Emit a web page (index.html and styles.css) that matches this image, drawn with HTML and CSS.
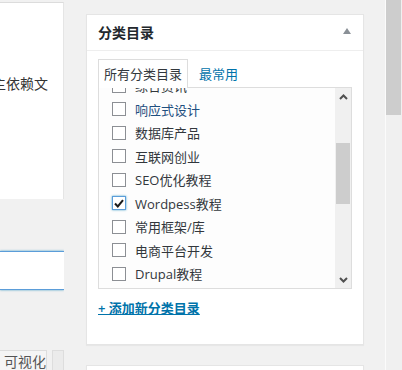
FILE: index.html
```html
<!DOCTYPE html>
<html lang="zh-CN">
<head>
    <meta charset="UTF-8">
    <meta name="viewport" content="width=device-width, initial-scale=1.0">
    <title>分类目录</title>
    <link rel="stylesheet" href="styles.css">
</head>
<body>
    <div class="page">
        <div class="editor">
            <div class="editor-panel">
                <p class="editor-text">主依赖文</p>
            </div>
            <div class="title-input"></div>
            <div class="editor-tabs">
                <span class="editor-tab">可视化</span>
                <span class="editor-tab editor-tab-off"></span>
            </div>
        </div>

        <div class="sidebar">
            <div class="postbox">
                <div class="postbox-header">
                    <h2>分类目录</h2>
                    <span class="toggle"></span>
                </div>
                <div class="postbox-inside">
                    <ul class="cat-tabs">
                        <li class="cat-tab active">所有分类目录</li>
                        <li class="cat-tab"><a href="#">最常用</a></li>
                    </ul>
                    <div class="cat-panel">
                        <div class="cat-list-wrap">
                            <ul class="cat-list">
                                <li><span class="box"></span>综合资讯</li>
                                <li class="hover"><span class="box"></span>响应式设计</li>
                                <li><span class="box"></span>数据库产品</li>
                                <li><span class="box"></span>互联网创业</li>
                                <li><span class="box"></span>SEO优化教程</li>
                                <li><span class="box checked"><svg width="10" height="9" viewBox="0 0 10 9"><path d="M1 4.5 L3.8 7.5 L9 1.2" fill="none" stroke="#1a1a1a" stroke-width="2"/></svg></span>Wordpess教程</li>
                                <li><span class="box"></span>常用框架/库</li>
                                <li><span class="box"></span>电商平台开发</li>
                                <li><span class="box"></span>Drupal教程</li>
                            </ul>
                        </div>
                        <div class="scrollbar">
                            <span class="arrow"><svg width="9" height="6" viewBox="0 0 9 6"><path d="M1 5 L4.5 1.5 L8 5" fill="none" stroke="#505050" stroke-width="2"/></svg></span>
                            <div class="track">
                                <div class="thumb"></div>
                            </div>
                            <span class="arrow"><svg width="9" height="6" viewBox="0 0 9 6"><path d="M1 1 L4.5 4.5 L8 1" fill="none" stroke="#505050" stroke-width="2"/></svg></span>
                        </div>
                    </div>
                    <a class="add-new" href="#">+ 添加新分类目录</a>
                </div>
            </div>
            <div class="postbox postbox-next"></div>
        </div>

        <div class="page-scroll">
            <div class="page-thumb"></div>
        </div>
    </div>
</body>
</html>
```

FILE: styles.css
```css
body {
    margin: 0;
    padding: 0;
    background-color: #f1f1f1;
    color: #444;
    font-family: "Open Sans", "Noto Sans CJK SC", sans-serif;
    font-size: 13px;
    overflow: hidden;
}

.page {
    display: flex;
    width: 402px;
    height: 370px;
    overflow: hidden;
}

/* left editor column */
.editor {
    width: 64px;
    flex-shrink: 0;
    display: flex;
    flex-direction: column;
    overflow: hidden;
}

.editor-panel {
    margin-top: 2px;
    height: 197px;
    background-color: #fff;
    border-top: 1px solid #dcdcdc;
    border-right: 1px solid #e5e5e5;
    overflow: hidden;
}

.editor-text {
    margin: 70px 0 0 -8px;
    line-height: 22px;
    font-size: 14px;
    color: #333;
    white-space: nowrap;
}

.title-input {
    margin-top: 52px;
    height: 37px;
    background-color: #fff;
    border-top: 1px solid #5b9dd9;
    border-bottom: 1px solid #5b9dd9;
    box-shadow: 0 0 2px rgba(30, 140, 190, 0.8);
}

.editor-tabs {
    margin-top: 60px;
    display: flex;
    gap: 5px;
}

.editor-tab {
    width: 52px;
    height: 20px;
    margin-left: -1px;
    background-color: #f5f5f5;
    border: 1px solid #ddd;
    border-bottom: none;
    font-size: 14px;
    line-height: 22px;
    color: #555;
    padding-left: 4px;
    box-sizing: border-box;
    white-space: nowrap;
}

.editor-tab-off {
    margin-left: 0;
    width: 20px;
    background-color: #ebebeb;
}

/* sidebar */
.sidebar {
    margin-left: 22px;
    width: 278px;
    flex-shrink: 0;
}

.postbox {
    margin-top: 14px;
    background-color: #fff;
    border: 1px solid #e5e5e5;
    box-shadow: 0 1px 1px rgba(0, 0, 0, 0.04);
    box-sizing: border-box;
}

.postbox-header {
    height: 35px;
    border-bottom: 1px solid #eee;
    display: flex;
    align-items: center;
    justify-content: space-between;
    padding: 0 12px 0 11px;
}

.postbox-header h2 {
    margin: 0 0 1px;
    font-size: 14px;
    font-weight: bold;
    color: #23282d;
}

.toggle {
    width: 0;
    height: 0;
    border-left: 4px solid transparent;
    border-right: 4px solid transparent;
    border-bottom: 6px solid #8a9096;
    margin-bottom: 3px;
}

.postbox-inside {
    padding: 8px 11px 27px;
}

.cat-tabs {
    list-style: none;
    margin: 0 0 -1px;
    padding: 0;
    display: flex;
    position: relative;
    z-index: 1;
}

.cat-tab {
    height: 29px;
    line-height: 28px;
    padding: 0 5px;
    box-sizing: border-box;
    border: 1px solid transparent;
    border-bottom: none;
}

.cat-tab.active {
    border-color: #ddd;
    background-color: #fff;
    color: #32373c;
}

.cat-tab a {
    color: #0073aa;
    text-decoration: none;
    padding-left: 5px;
}

.cat-panel {
    height: 202px;
    border: 1px solid #ddd;
    background-color: #fdfdfd;
    box-sizing: border-box;
    display: flex;
}

.cat-list-wrap {
    flex: 1;
    overflow: hidden;
}

.cat-list {
    list-style: none;
    margin: -14px 0 0;
    padding: 0 0 0 13px;
}

.cat-list li {
    height: 23.5px;
    display: flex;
    align-items: center;
    color: #32373c;
    white-space: nowrap;
}

.cat-list li.hover {
    color: #1f4f7f;
}

.box {
    width: 14px;
    height: 14px;
    box-sizing: border-box;
    border: 1px solid #8c8f94;
    background-color: #fff;
    margin-right: 9px;
    display: flex;
    align-items: center;
    justify-content: center;
    flex-shrink: 0;
}

.box.checked {
    border-color: #5b9dd9;
    box-shadow: 0 0 2px rgba(30, 140, 190, 0.8);
}

.box.checked svg {
    display: block;
}

.scrollbar {
    width: 16px;
    background-color: #f0f0f0;
    display: flex;
    flex-direction: column;
}

.arrow {
    height: 17px;
    display: flex;
    align-items: center;
    justify-content: center;
}

.arrow svg {
    display: block;
}

.track {
    flex: 1;
    padding-top: 38px;
}

.thumb {
    margin: 0 1px;
    height: 61px;
    background-color: #cdcdcd;
}

.add-new {
    display: inline-block;
    margin-top: 10px;
    color: #0073aa;
    font-weight: 600;
    text-decoration: underline;
    line-height: 18px;
}

.postbox-next {
    margin-top: 20px;
    height: 30px;
}

/* page scrollbar */
.page-scroll {
    margin-left: 21px;
    width: 17px;
    flex-shrink: 0;
    background-color: #f0f0f0;
    border-left: 1px solid #fbfbfb;
    box-sizing: border-box;
}

.page-thumb {
    margin: 0 1px 0 0;
    height: 115px;
    background-color: #cdcdcd;
}
```
